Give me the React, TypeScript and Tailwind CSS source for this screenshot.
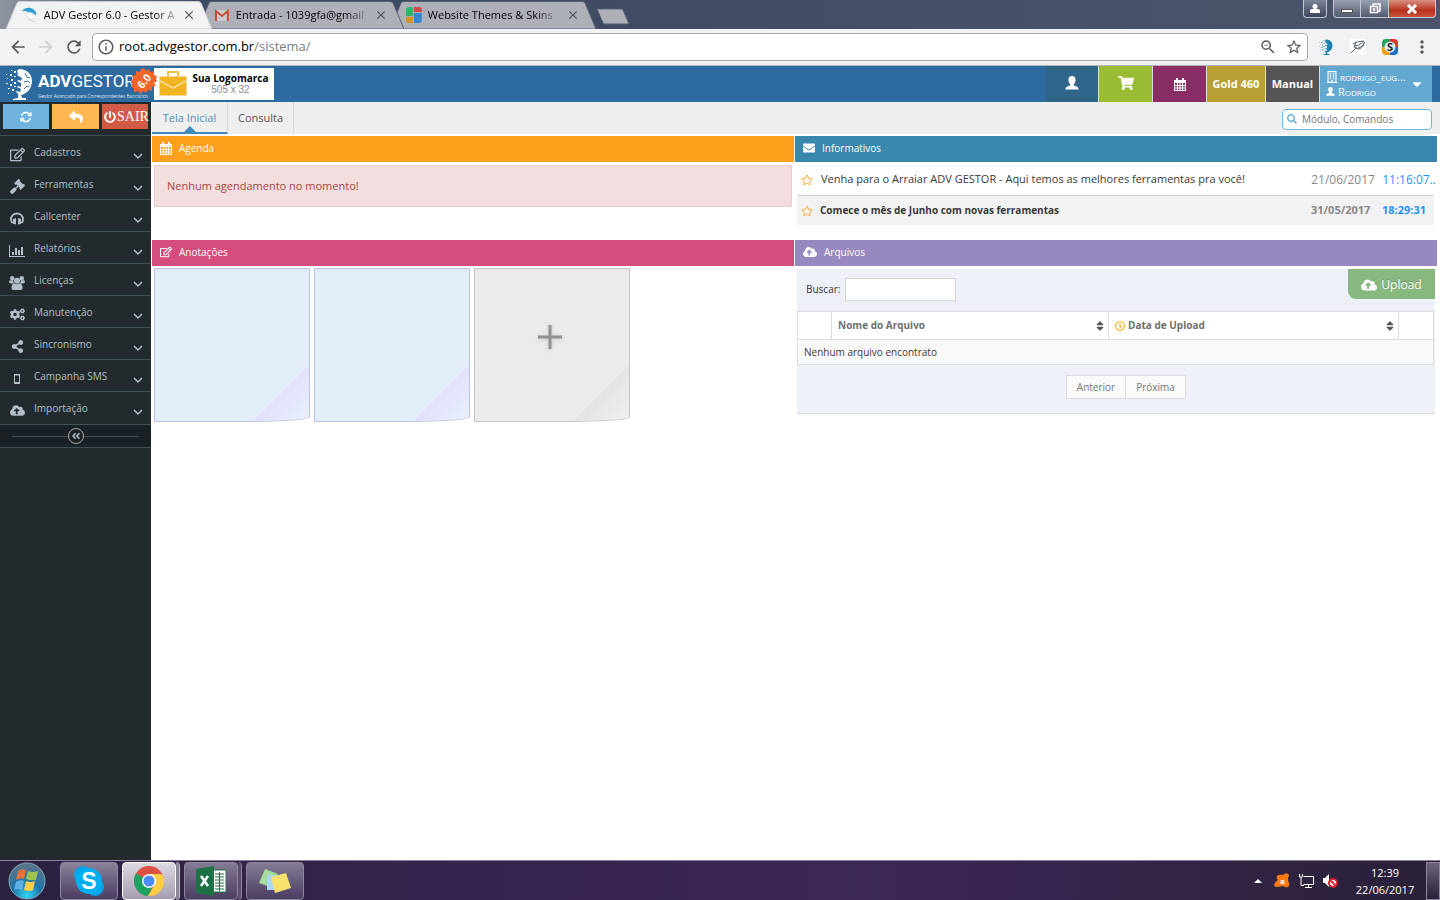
import type { ReactNode } from 'react'
import {
  FaAngleDoubleLeft,
  FaCaretDown,
  FaCloudUploadAlt,
  FaCogs,
  FaEnvelope,
  FaGavel,
  FaPowerOff,
  FaRegBuilding,
  FaRegClock,
  FaRegEdit,
  FaRegStar,
  FaReply,
  FaSearch,
  FaShareAlt,
  FaShoppingCart,
  FaSort,
} from 'react-icons/fa'
import { FaArrowsRotate } from 'react-icons/fa6'
import { MdArrowBack, MdArrowForward, MdClose, MdInfoOutline, MdMoreVert, MdRefresh, MdStarBorder, MdZoomOut } from 'react-icons/md'

const UserIcon = ({ className }: { className?: string }) => (
  <svg viewBox="0 0 14 14" className={className} fill="currentColor">
    <path d="M7 0c2.400 0 3.600 1.600 3.600 4 0 1.900-.8 3.400-1.800 4.300v1.200c2.500.7 4.700 1.300 4.700 3.500v.5H.5V13c0-2.200 2.200-2.800 4.700-3.500V8.300C4.200 7.400 3.400 5.900 3.400 4c0-2.400 1.200-4 3.600-4z" />
  </svg>
)

const CalendarIcon = () => (
  <svg viewBox="0 0 12 13" className="h-[13px] w-3" fill="currentColor">
    <path
      fillRule="evenodd"
      d="M0 2h2V0h2v2h4V0h2v2h2v11H0zM1 5v2h2V5zM4 5v2h1.500V5zM6.500 5v2H8V5zM9 5v2h2V5zM1 8v1.500h2V8zM4 8v1.500h1.500V8zM6.500 8v1.500H8V8zM9 8v1.500h2V8zM1 10.500V12h2v-1.500zM4 10.500V12h1.500v-1.500zM6.500 10.500V12H8v-1.500zM9 10.500V12h2v-1.500z"
    />
  </svg>
)

const HeadphonesIcon = () => (
  <svg viewBox="0 0 14 13" className="h-[13px] w-3.5">
    <path d="M2.500 11C1 9.500 1 8.500 1 7a6 5.500 0 0112 0c0 1.500 0 2.500-1.500 4" fill="none" stroke="currentColor" strokeWidth="1.800" />
    <path d="M3 7l3-1v6.500L3 12zM11 7L8 6v6.500l3-.5z" fill="currentColor" />
  </svg>
)

const ChartIcon = () => (
  <svg viewBox="0 0 16 12" className="h-3 w-4" fill="currentColor">
    <path d="M0 0h1v11h15v1H0zM3 7h2v3H3zM6 3h2v7H6zM9 5h2v5H9zM12 2h2v8h-2z" />
  </svg>
)

const GroupIcon = () => (
  <svg viewBox="0 0 16 14" className="h-3.5 w-4" fill="currentColor">
    <circle cx="3.200" cy="2.200" r="2.200" />
    <circle cx="12.800" cy="2.200" r="2.200" />
    <circle cx="8" cy="4.700" r="3" />
    <path d="M0 5.500q0-1.200 1.500-1.200h2.800Q4 6.500 5.300 7.500H2Q0 7.500 0 5.500zM16 5.500q0-1.200-1.500-1.200h-2.800q.3 2.200-1 3.200H14q2 0 2-2zM2.500 12c0-3 1-4.500 3-4.500q2.500 1.500 5 0c2 0 3 1.500 3 4.500 0 1.500-1 2-2 2h-7c-1 0-2-.5-2-2z" />
  </svg>
)

const MobileIcon = () => (
  <svg viewBox="0 0 6 10" className="h-2.5 w-1.5" fill="currentColor">
    <path fillRule="evenodd" d="M0 0h6v10H0zM1 1.500v6.500h4V1.500z" />
  </svg>
)

const MENU = [
  { label: 'Cadastros', icon: <FaRegEdit /> },
  { label: 'Ferramentas', icon: <FaGavel /> },
  { label: 'Callcenter', icon: <HeadphonesIcon /> },
  { label: 'Relatórios', icon: <ChartIcon /> },
  { label: 'Licenças', icon: <GroupIcon /> },
  { label: 'Manutenção', icon: <FaCogs /> },
  { label: 'Sincronismo', icon: <FaShareAlt className="text-[13px]" /> },
  { label: 'Campanha SMS', icon: <MobileIcon /> },
  { label: 'Importação', icon: <FaCloudUploadAlt /> },
]

const GlobeDots = ({ className }: { className?: string }) => (
  <svg viewBox="0 0 28 32" className={className}>
    <g fill="currentColor">
      <path d="M14 1c8 0 13 5 13 12 0 8-6 13-11 14l1 3h4v2H8v-1l5-1c1-3 0-5-2-6l1-1 3 1 1-3-4-2 1-1 3 1v-4l-4-2 2-1 2 1 1-3-5-3 1-1-1-3z" />
      <path d="M5 6h2v2H5zM9 3h2v2H9zM2 10h1v1H2zM6 11h2v2H6zM9 8h2v1H9zM1 15h2v1H1zM5 16h2v2H5zM9 14h2v2H9zM3 20h2v1H3zM7 21h2v2H7zM9 18h2v1H9zM1 6h1v1H1zM6 2h1v1H6zM3 25h1v1H3z" />
    </g>
    <path d="M20 5l2 4 3 1M19 14l4-1 2 2M19 21l3-3 2 1" stroke="#2c6aa0" fill="none" />
  </svg>
)

const SwanIcon = () => (
  <svg viewBox="0 0 16 16" className="size-4">
    <path d="M0 4c3-4 8-4 11-2 3 2 4 4 3 6-2 2-7-1-10-4L0 4z" fill="#2d9bd0" />
    <path d="M2 6c2 5 6 8 13 9-5 0-8-1-10-4L2 6z" fill="#b9c0c4" />
    <path d="M4 6c3-2 8 0 10 3-1 2-3 3-5 3-3-1-4-3-5-6z" fill="#f7f9fa" stroke="#cfd6da" strokeWidth=".5" />
  </svg>
)

const GmailIcon = () => (
  <svg viewBox="0 0 16 16" className="size-4">
    <path d="M2 3h12v11H2z" fill="#c9cbd0" />
    <path d="M2 14V4l6 5 6-5v10" fill="none" stroke="#d14836" strokeWidth="2" />
  </svg>
)

const ThemesIcon = () => (
  <svg viewBox="0 0 16 16" className="size-4">
    <path d="M3 0h4v9H0V3a3 3 0 013-3z" fill="#2fb66b" />
    <path d="M8 0h5a3 3 0 013 3v2H8z" fill="#d14b45" />
    <path d="M8 6h8v7a3 3 0 01-3 3H8z" fill="#3486cf" />
    <path d="M0 10h7v6H3a3 3 0 01-3-3z" fill="#d7911d" />
  </svg>
)

const BrowserTab = ({ icon, title, active, className }: { icon: ReactNode; title: string; active?: boolean; className: string }) => (
  <div className={`relative h-7 w-[206px] ${className}`}>
    <svg viewBox="0 0 206 28" preserveAspectRatio="none" className="absolute inset-0 size-full">
      <path
        d="M0 28L11 2Q12 .5 14 .5H192Q194 .5 195 2L206 28z"
        fill={active ? '#f2f1f3' : '#adb0b7'}
        stroke={active ? '#c9cbd2' : '#596074'}
      />
    </svg>
    <div className="relative flex h-full items-center pr-4 pl-4">
      {icon}
      <span className="ml-1.5 w-[136px] text-[11px] whitespace-nowrap">
        <span className="bg-linear-to-r from-black from-85% to-black/30 bg-clip-text text-transparent">{title}</span>
      </span>
      <button type="button" aria-label="Fechar guia" className="ml-1 text-sm text-[#4e5157]">
        <MdClose />
      </button>
    </div>
  </div>
)

const BrowserChrome = () => (
  <div className="font-['Open_Sans',sans-serif]">
    <div className="flex h-[29px] items-end justify-between bg-linear-to-r from-[#8d939f] via-[#3b4860] via-15% to-[#4c546b]">
      <div className="flex pl-1.5">
        <BrowserTab active className="z-30" icon={<SwanIcon />} title="ADV Gestor 6.0 - Gestor A" />
        <BrowserTab className="z-20 -ml-3.5" icon={<GmailIcon />} title="Entrada - 1039gfa@gmail" />
        <BrowserTab className="z-10 -ml-3.5" icon={<ThemesIcon />} title="Website Themes & Skins" />
        <button type="button" aria-label="Nova guia" className="mb-1 self-end">
          <svg viewBox="0 0 34 17" className="h-[17px] w-[34px]">
            <path d="M1 1h24q1.500 0 2 1l6 14H9q-1.500 0-2-1z" fill="#adb0b7" stroke="#596074" />
          </svg>
        </button>
      </div>
      <div className="flex self-start pr-1 text-white">
        <button type="button" aria-label="Perfil" className="mr-1.5 flex h-[18px] w-6 items-center justify-center rounded-b border border-t-0 border-[#c3c8d2] bg-linear-to-b from-[#7c8597] to-[#3d465b]">
          <svg viewBox="0 0 10 10" className="size-2.5" fill="currentColor">
            <circle cx="5" cy="2.500" r="2.500" />
            <path d="M0 9V7q0-2 2-2h6q2 0 2 2v2z" />
          </svg>
        </button>
        <button type="button" aria-label="Minimizar" className="flex h-[18px] w-7 items-center justify-center rounded-bl border border-t-0 border-[#c3c8d2] bg-linear-to-b from-[#9ba1ae] to-[#525b70]">
          <span className="mt-1 h-1 w-3 border border-[#555] bg-white" />
        </button>
        <button type="button" aria-label="Restaurar" className="flex h-[18px] w-7 items-center justify-center border-r border-b border-[#c3c8d2] bg-linear-to-b from-[#9ba1ae] to-[#525b70]">
          <svg viewBox="0 0 12 11" className="h-[11px] w-3" fill="none" stroke="#fff" strokeWidth="1.500">
            <path d="M4 3V1h7v7H9" />
            <path d="M1.500 3.500h7v6h-7z" />
            <path d="M4.500 6h1v1h-1z" />
          </svg>
        </button>
        <button type="button" aria-label="Fechar" className="flex h-[18px] w-[47px] items-center justify-center rounded-br border-r border-b border-[#c3c8d2] bg-linear-to-b from-[#d98e80] via-[#b5301a] via-60% to-[#c9523a]">
          <svg viewBox="0 0 12 10" className="h-2.5 w-3" stroke="#fff" strokeWidth="3">
            <path d="M2 1l8 8M10 1L2 9" />
          </svg>
        </button>
      </div>
    </div>
    <div className="flex h-[37px] items-center border-b border-[#b3b3b5] bg-[#f2f1f3] pr-2 pl-2 text-[#5a5a5a]">
      <button type="button" aria-label="Voltar" className="w-7 text-xl">
        <MdArrowBack />
      </button>
      <button type="button" aria-label="Avançar" className="w-7 text-xl text-[#d0d0d2]">
        <MdArrowForward />
      </button>
      <button type="button" aria-label="Recarregar" className="w-7 text-xl">
        <MdRefresh />
      </button>
      <div className="flex h-7 flex-1 items-center rounded-sm border border-[#a9a9ab] bg-white pr-1 pl-1">
        <MdInfoOutline className="text-lg" />
        <span className="ml-1 flex-1 text-[13px] text-black">
          root.advgestor.com.br<span className="text-[#7c7c7c]">/sistema/</span>
        </span>
        <MdZoomOut className="text-lg" />
        <MdStarBorder className="ml-2 text-lg" />
      </div>
      <div className="ml-2.5 flex items-center gap-4">
        <GlobeDots className="size-4 text-[#1f86b4]" />
        <svg viewBox="0 0 16 16" className="size-4 bg-white" fill="none" stroke="#55646c">
          <path d="M1 14l5-5 4 1 5-7M3 5l4-2 7-1-5 4-5 1 4 3M6 3l-2 6M8 9l5-2 1-3" />
        </svg>
        <svg viewBox="0 0 16 16" className="size-4 rounded">
          <path d="M0 0h8v8H0z" fill="#2a9e5c" />
          <path d="M8 0h8v8H8z" fill="#e5332a" />
          <path d="M0 8h8v8H0z" fill="#f39c12" />
          <path d="M8 8h8v8H8z" fill="#1d6fc0" />
          <circle cx="8" cy="8" r="5.500" fill="#dfe9ec" />
          <text x="8" y="12" textAnchor="middle" fontSize="11" fontWeight="700" fill="#17262e">
            S
          </text>
        </svg>
        <MdMoreVert className="-ml-0.5 text-xl" />
      </div>
    </div>
  </div>
)

const AppLogo = () => (
  <div className="flex w-[154px] items-center pl-1 text-white">
    <GlobeDots className="h-8 w-[30px]" />
    <div className="ml-1 font-['Roboto',sans-serif] whitespace-nowrap">
      <div className="text-[17px] leading-6">
        <b>ADV</b>GESTOR
      </div>
      <div className="text-[5px] leading-[6px] font-light">Gestor Avançado para Correspondentes Bancários</div>
    </div>
  </div>
)

const VersionBadge = () => (
  <svg viewBox="0 0 26 26" className="absolute top-0.5 left-[131px] z-10 size-[26px]">
    <path
      d="M13 0l2 3 3-2 1 3 4-1 0 4 3 1-1 3 1 2-3 2 2 3-4 1 0 4-4-1-2 3-3-2-3 3-2-3-4 1 0-4-4-1 2-3-2-3 3-2-1-3 4-1 0-4 4 1 1-3z"
      fill="#f2652a"
    />
    <text x="13" y="17" transform="rotate(-50 13 13)" textAnchor="middle" fontFamily="Liberation Sans" fontSize="11" fontWeight="700" fill="#fff">
      6.0
    </text>
  </svg>
)

const AppHeader = () => (
  <header className="relative flex h-9 bg-[#2c6aa0] font-['Open_Sans',sans-serif] text-white">
    <AppLogo />
    <VersionBadge />
    <div className="my-0.5 flex w-[120px] items-center bg-white pl-[5px]">
      <svg viewBox="0 0 28 28" className="size-7">
        <path d="M9 6V2h10v4" fill="none" stroke="#f3bd3c" strokeWidth="2" />
        <path d="M0 6h28v20H0z" fill="#f7d98f" />
        <path d="M1 7h26v3l-13 7L1 10zM1 12l13 7 13-7v13H1z" fill="#efb41f" />
      </svg>
      <div className="flex-1 text-center whitespace-nowrap">
        <div className="text-[10px] leading-3 font-bold text-black">Sua Logomarca</div>
        <div className="font-['Liberation_Sans',sans-serif] text-[10px] leading-3 text-[#8d8a99]">505 x 32</div>
      </div>
    </div>
    <div className="ml-auto flex pr-2 text-[11px] font-bold">
      <button type="button" aria-label="Usuário" className="flex w-[53px] items-center justify-center bg-[#2e6589]">
        <UserIcon className="mb-0.5 size-3.5" />
      </button>
      <button type="button" aria-label="Carrinho" className="flex w-[54px] items-center justify-center border-l border-[#ddd] bg-[#9abc32]">
        <FaShoppingCart className="mb-0.5 text-base" />
      </button>
      <button type="button" aria-label="Agenda" className="flex w-[54px] items-center justify-center border-l border-[#ddd] bg-[#892e65]">
        <CalendarIcon />
      </button>
      <a href="#gold" className="flex w-[59px] items-center justify-center border-l border-[#ddd] bg-[#b8a035]">
        Gold 460
      </a>
      <a href="#manual" className="flex w-[54px] items-center justify-center border-l border-[#ddd] bg-[#555]">
        Manual
      </a>
      <button type="button" className="flex w-[113px] items-center border-l border-[#ddd] bg-[#62a8d1] px-1.5 text-left font-normal">
        <span className="flex-1 leading-[15px] [font-variant:small-caps]">
          <span className="flex items-center gap-0.5">
            <FaRegBuilding className="text-xs" />
            rodrigo_eug...
          </span>
          <span className="flex items-center gap-[3px]">
            <UserIcon className="size-[9px]" />
            Rodrigo
          </span>
        </span>
        <FaCaretDown className="mr-0.5 text-sm" />
      </button>
    </div>
  </header>
)

const Sidebar = () => (
  <aside className="w-[151px] shrink-0 bg-[#222a2d] text-[#b3bec8]">
    <div className="flex h-[33px] gap-[3px] px-[3px] pt-0.5 text-white">
      <button type="button" aria-label="Atualizar" className="flex h-[25px] w-[46px] items-center justify-center bg-[#6fb3e0] text-xs">
        <FaArrowsRotate />
      </button>
      <button type="button" aria-label="Voltar" className="flex h-[25px] w-[47px] items-center justify-center bg-[#ffb752] text-sm">
        <FaReply />
      </button>
      <button type="button" className="flex h-[25px] w-[46px] items-center gap-px bg-[#d15b47] pl-0.5 font-['Liberation_Serif',serif] text-sm">
        <FaPowerOff className="shrink-0 text-xs" />
        SAIR
      </button>
    </div>
    <nav className="pb-px">
      {MENU.map(({ label, icon }) => (
        <a key={label} href="#menu" className="flex h-8 items-center border-t border-[#3f4f55] pt-0.5 pr-2 text-[10px]">
          <span className="mt-1 flex w-[34px] justify-center text-[15px]">{icon}</span>
          <span className="flex-1">{label}</span>
          <svg viewBox="0 0 10 10" className="mt-1.5 size-2.5" fill="none" stroke="currentColor" strokeWidth="1.500">
            <path d="M1 3l4 4 4-4" />
          </svg>
        </a>
      ))}
    </nav>
    <div className="flex h-6 items-center border-y border-[#3f4f55] bg-[#1a2023] px-3">
      <span className="h-px flex-1 bg-[#3f4f55]" />
      <button type="button" aria-label="Recolher menu" className="flex size-4 items-center justify-center rounded-full border border-[#aaa] text-[10px]">
        <FaAngleDoubleLeft />
      </button>
      <span className="h-px flex-1 bg-[#3f4f55]" />
    </div>
  </aside>
)

const PageTabs = () => (
  <div className="flex h-8 items-center justify-between bg-[#efefef] pr-2">
    <nav className="flex h-full text-[11px]">
      <a href="#inicio" className="relative flex w-[76px] items-center justify-center border-r border-b-2 border-r-[#d5d5d5] border-b-[#4089b8] pt-0.5 text-[#4c8fbd]">
        Tela Inicial
        <svg viewBox="0 0 12 6" className="absolute bottom-0 h-1.5 w-3" fill="#4089b8">
          <path d="M6 0l6 6H0z" />
        </svg>
      </a>
      <a href="#consulta" className="flex w-[66px] items-center justify-center border-r border-[#d5d5d5] text-[#555]">
        Consulta
      </a>
    </nav>
    <label className="mt-0.5 flex h-[21px] w-[150px] items-center rounded-sm border border-[#6fb3e0] bg-white pl-1">
      <FaSearch className="size-2.5 shrink-0 text-[#6fb3e0]" />
      <input
        type="text"
        aria-label="Módulo, Comandos"
        placeholder="Módulo, Comandos"
        className="ml-[5px] w-full min-w-0 text-[10px] outline-none placeholder:text-[#757575]"
      />
    </label>
  </div>
)

const PanelTitle = ({ icon, title, className }: { icon: ReactNode; title: string; className: string }) => (
  <h2 className={`flex h-[26px] items-center gap-[7px] px-2 pb-0.5 text-[10px] text-white ${className}`}>
    {icon}
    {title}
  </h2>
)

const Note = ({ className, children }: { className: string; children?: ReactNode }) => (
  <div className={`flex h-[154px] w-[156px] items-center justify-center rounded-br-[60px_5px] border ${className}`}>{children}</div>
)

const BLUE_NOTE = 'border-[#bcc3e6] bg-[linear-gradient(135deg,#e3edf8_82%,#e2e1fd_82%,#e9f1fc)]'
const GRAY_NOTE = 'border-[#c3c4c6] bg-[linear-gradient(135deg,#ebebeb_82%,#e4e4e4_82%,#f0f0f0)]'

const App = () => (
  <div className="flex min-h-screen flex-col bg-white font-['Open_Sans',sans-serif] text-[#393939]">
    <BrowserChrome />
    <AppHeader />
    <div className="flex flex-1">
      <Sidebar />
      <main className="flex-1 pl-px">
        <PageTabs />
        <div className="grid grid-cols-2 gap-x-px pt-0.5 pr-[3px]">
          <section className="h-[104px]">
            <PanelTitle icon={<CalendarIcon />} title="Agenda" className="bg-[#ffa01c]" />
            <div className="mx-0.5 mt-[3px] flex h-[42px] items-center border border-[#ebccd1] bg-[#f2dede] px-3 text-[11px] text-[#a94442]">
              Nenhum agendamento no momento!
            </div>
          </section>
          <section className="h-[104px]">
            <PanelTitle icon={<FaEnvelope className="text-xs" />} title="Informativos" className="bg-[#3a87ad]" />
            <ul className="mr-[3px] ml-0.5">
              <li className="flex h-[34px] items-center border-b border-[#d0d5de] px-1 pt-0.5 text-[11px]">
                <FaRegStar className="text-xs text-[#fbb450]" />
                <span className="ml-2 flex-1">Venha para o Arraiar ADV GESTOR - Aqui temos as melhores ferramentas pra você!</span>
                <span className="w-[71px] text-xs text-[#888]">21/06/2017</span>
                <span className="-mr-1.5 text-xs text-[#2a91fc]">11:16:07..</span>
              </li>
              <li className="flex h-[29px] items-center bg-[#f2f2f2] px-1 text-[11px] font-bold">
                <FaRegStar className="text-xs text-[#fbb450]" />
                <span className="ml-[7px] flex-1 text-[10px]">Comece o mês de Junho com novas ferramentas</span>
                <span className="w-[71px] text-[#888]">31/05/2017</span>
                <span className="w-12 text-[#2a91fc]">18:29:31</span>
              </li>
            </ul>
          </section>
          <section>
            <PanelTitle icon={<FaRegEdit className="text-xs" />} title="Anotações" className="bg-[#d54c7e]" />
            <div className="flex gap-1 px-0.5 pt-0.5">
              <Note className={BLUE_NOTE} />
              <Note className={BLUE_NOTE} />
              <Note className={GRAY_NOTE}>
                <button type="button" aria-label="Nova anotação" className="mr-1 mb-4 text-[#929292] drop-shadow-sm">
                  <svg viewBox="0 0 24 24" className="size-6" stroke="currentColor" strokeWidth="3">
                    <path d="M12 0v24M0 12h24" />
                  </svg>
                </button>
              </Note>
            </div>
          </section>
          <section>
            <PanelTitle icon={<FaCloudUploadAlt className="text-sm" />} title="Arquivos" className="bg-[#9888c0]" />
            <div className="mx-0.5 mt-[3px] border-b border-[#ddd] bg-[#edf1f7] text-[10px]">
              <div className="flex h-[42px] justify-between pl-[9px]">
                <label className="flex h-10 items-center gap-[5px]">
                  Buscar:
                  <input type="text" className="h-[23px] w-[111px] border border-[#d5d5d5] bg-white px-1" />
                </label>
                <button type="button" className="flex h-[30px] w-[87px] items-center justify-center gap-1 rounded-bl-lg bg-[#87b87f] pt-0.5 text-xs text-white [text-shadow:0_-1px_0_#00000040]">
                  <FaCloudUploadAlt className="text-base" />
                  Upload
                </button>
              </div>
              <table className="w-[calc(100%-1px)] table-fixed border-collapse border border-[#ddd] bg-white text-left">
                <thead className="text-[#707070]">
                  <tr className="h-7">
                    <th className="w-[34px] border border-[#ddd]" />
                    <th className="border border-[#ddd] pr-0.5 pl-1.5">
                      <div className="flex items-center justify-between">
                        Nome do Arquivo
                        <FaSort className="text-xs text-[#555]" />
                      </div>
                    </th>
                    <th className="w-[290px] border border-[#ddd] pr-0.5 pl-1.5">
                      <div className="flex items-center gap-[3px]">
                        <FaRegClock className="text-[#ffa500]" />
                        Data de Upload
                        <FaSort className="ml-auto text-xs text-[#555]" />
                      </div>
                    </th>
                    <th className="w-[35px] border border-[#ddd]" />
                  </tr>
                </thead>
                <tbody>
                  <tr className="h-[25px] bg-[#f9f9f9]">
                    <td colSpan={4} className="px-1.5">
                      Nenhum arquivo encontrato
                    </td>
                  </tr>
                </tbody>
              </table>
              <div className="flex justify-center pt-2.5 pb-3.5 pl-5 text-[#777]">
                <button type="button" className="h-6 w-[60px] border border-[#ddd] bg-[#fafafa]">
                  Anterior
                </button>
                <button type="button" className="-ml-px h-6 w-[61px] border border-[#ddd] bg-[#fafafa]">
                  Próxima
                </button>
              </div>
            </div>
          </section>
        </div>
      </main>
    </div>
    <Taskbar />
  </div>
)

const TASK = 'flex h-[38px] items-center justify-center rounded-sm border'

const Taskbar = () => (
  <footer className="flex h-10 items-center border-t border-[#8a7f9c] bg-linear-to-r from-[#2c2140] via-[#3c2757] via-60% to-[#2a2138] text-white">
    <button type="button" aria-label="Iniciar" className="ml-2 size-[38px]">
      <svg viewBox="0 0 38 38" className="size-[38px]">
        <defs>
          <radialGradient id="orb" cx=".5" cy=".9" r=".8">
            <stop offset="0" stopColor="#35d4f8" />
            <stop offset=".5" stopColor="#1d76a8" />
            <stop offset="1" stopColor="#56758c" />
          </radialGradient>
        </defs>
        <circle cx="19" cy="19" r="18" fill="url(#orb)" stroke="#7fa6b8" />
        <path d="M10 9q4-3 8-1l-2 9q-4-2-8 1z" fill="#e8703a" />
        <path d="M20 9q5 2 10 0l-2 9q-5 1-10-1z" fill="#9bc455" />
        <path d="M8 20q4-3 8-1l-2 9q-4-2-8 0z" fill="#5fb0e8" />
        <path d="M18 19q5 2 9 0l-2 9q-4 2-9 0z" fill="#f8cf4b" />
      </svg>
    </button>
    <div className="ml-3.5 flex">
      <button type="button" aria-label="Skype" className={`${TASK} w-[58px] border-[#8f86a0] bg-linear-to-b from-[#8b8398] to-[#4b3d63]`}>
        <svg viewBox="0 0 32 32" className="size-8">
          <circle cx="10" cy="10" r="9" fill="#00a5e5" />
          <circle cx="22" cy="22" r="9" fill="#00a5e5" />
          <circle cx="16" cy="16" r="13" fill="#00aff0" />
          <text x="16" y="24" textAnchor="middle" fontFamily="Liberation Sans" fontSize="23" fontWeight="700" fill="#fff">
            S
          </text>
        </svg>
      </button>
      <button type="button" aria-label="Chrome" className={`${TASK} ml-1 w-[54px] border-white bg-linear-to-b from-[#dcd9e0] to-[#a69eb0]`}>
        <svg viewBox="0 0 30 30" className="size-[30px]">
          <circle cx="15" cy="15" r="15" fill="#dd5144" />
          <path d="M15 15L2 7.500A15 15 0 0014 30l6-12z" fill="#1da261" />
          <path d="M15 8h13.300A15 15 0 0114 30l7-12z" fill="#ffcd46" />
          <circle cx="15" cy="15" r="7" fill="#fff" />
          <circle cx="15" cy="15" r="5.500" fill="#4c8bf5" />
        </svg>
      </button>
      <span className="h-[38px] w-1 rounded-r-sm border-r border-[#c8c3cf] bg-[#8b8398]" />
      <button type="button" aria-label="Excel" className={`${TASK} ml-1 w-[54px] border-[#8f86a0] bg-linear-to-b from-[#857c93] to-[#4b3d63]`}>
        <svg viewBox="0 0 30 30" className="size-[30px]">
          <path d="M16 4h14v22H16z" fill="#fff" stroke="#1e7145" />
          <path d="M19 8h9M19 11h9M19 14h9M19 17h9M19 20h9M19 23h9M23.500 6v19" stroke="#1e7145" />
          <path d="M0 3l18-3v30L0 27z" fill="#1e7145" />
          <path d="M5 10l7 10M12 10L5 20" stroke="#fff" strokeWidth="2.500" />
        </svg>
      </button>
      <span className="h-[38px] w-1 rounded-r-sm border-r border-[#8f86a0] bg-[#5a4d70]" />
      <button type="button" aria-label="Notas" className={`${TASK} ml-1 w-[58px] border-[#8f86a0] bg-linear-to-b from-[#857c93] to-[#4b3d63]`}>
        <svg viewBox="0 0 32 26" className="h-[26px] w-8">
          <path d="M6 1l13 5-5 14L0 15z" fill="#a5dc9c" />
          <path d="M8 7h13v15H8z" fill="#a9d8f5" />
          <path d="M12 9l15-4 5 15-16 5z" fill="#f9e26b" />
        </svg>
      </button>
    </div>
    <div className="ml-auto flex items-center">
      <svg viewBox="0 0 8 4" className="h-1 w-2" fill="#fff">
        <path d="M4 0l4 4H0z" />
      </svg>
      <svg viewBox="0 0 16 16" className="ml-3 size-4">
        <path d="M9 2q3-3 5-1 2 1 0 4 0 3 1 5 1 3-1 4-2 1-5-1-4 1-7 1-3-1-1-4 1-2 3-3-2-2-1-4 2-2 6-1z" fill="#ff7b10" />
        <text x="8.500" y="10.500" textAnchor="middle" fontFamily="Liberation Sans" fontSize="8" fontWeight="700" fill="#fff">
          a
        </text>
      </svg>
      <svg viewBox="0 0 16 16" className="ml-2 size-4" fill="none" stroke="#fff">
        <path d="M5.500 3.500h10v8h-10M10.500 12v3M7 14.500h7M1.500 1v3h3V1M3 4v8.500h3" />
      </svg>
      <svg viewBox="0 0 16 16" className="ml-2 size-4">
        <path d="M1 5h2l4-4v13L3 10H1z" fill="#fff" />
        <circle cx="11" cy="10" r="4" fill="#fff" stroke="#d8202a" strokeWidth="2" />
        <path d="M8 7l6 6" stroke="#d8202a" strokeWidth="2" />
      </svg>
      <div className="ml-4 w-[62px] text-center text-[11px] leading-[17px] whitespace-nowrap">
        <div>12:39</div>
        <div>22/06/2017</div>
      </div>
      <button type="button" aria-label="Mostrar área de trabalho" className="ml-2.5 h-[38px] w-3.5 border border-[#8f86a0] bg-linear-to-b from-[#6b6479] to-[#2a2138]" />
    </div>
  </footer>
)

export default App
